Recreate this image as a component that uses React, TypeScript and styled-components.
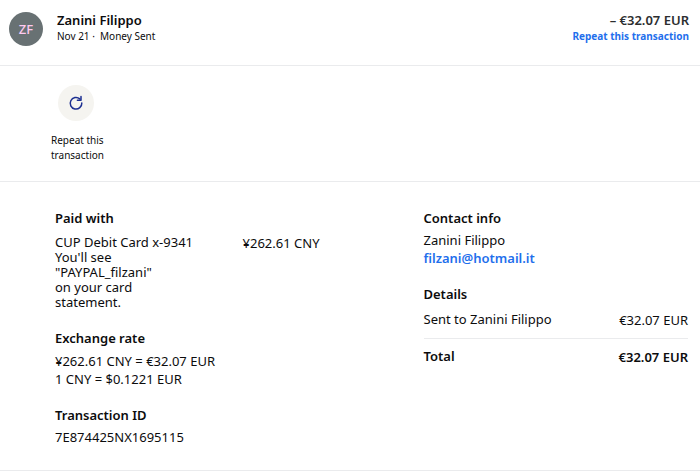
import React from "react";
import styled, { createGlobalStyle } from "styled-components";

const GlobalStyle = createGlobalStyle`
  *, *::before, *::after { box-sizing: border-box; }
  body {
    margin: 0;
    background: #fff;
    color: #0c0c0d;
    font-family: "Noto Sans", "Open Sans", sans-serif;
    font-size: 13px;
    line-height: 18px;
  }
  h1, h2, p, dl, dt, dd { margin: 0; }
`;

const Transaction = styled.article`
  border-bottom: 1px solid #eaebed;
`;

const Header = styled.header`
  display: flex;
  align-items: flex-start;
  gap: 14px;
  padding: 12px 11px 19px 9px;
  border-bottom: 1px solid #eaebed;
`;

const Avatar = styled.div`
  display: flex;
  align-items: center;
  justify-content: center;
  width: 34px;
  height: 34px;
  border-radius: 50%;
  background: #687173;
  color: #ffc9f0;
  font-weight: 500;
`;

const Summary = styled.div<{ $end?: boolean }>`
  display: flex;
  flex-direction: column;
  align-items: ${(p) => (p.$end ? "flex-end" : "flex-start")};
  margin-left: ${(p) => (p.$end ? "auto" : "0")};
`;

const Name = styled.h1`
  font-size: 13px;
  font-weight: 600;
  line-height: 17px;
`;

const Amount = styled.strong`
  color: #2c2e2f;
  font-weight: 600;
  line-height: 17px;
`;

const Meta = styled.p`
  font-size: 10px;
  line-height: 15px;
`;

const Link = styled.a<{ $small?: boolean }>`
  color: #1f6fec;
  font-size: ${(p) => (p.$small ? "10px" : "13px")};
  line-height: ${(p) => (p.$small ? "15px" : "18px")};
  font-weight: ${(p) => (p.$small ? 700 : 600)};
  text-decoration: none;
`;

const Actions = styled.div`
  padding: 19px 36px 18px;
  border-bottom: 1px solid #eaebed;
`;

const ActionButton = styled.button`
  display: flex;
  flex-direction: column;
  align-items: center;
  gap: 12px;
  width: 80px;
  padding: 0;
  border: 0;
  background: none;
  color: inherit;
  font: inherit;
  font-size: 10px;
  line-height: 15px;
  cursor: pointer;
`;

const ActionIcon = styled.span`
  display: flex;
  align-items: center;
  justify-content: center;
  width: 36px;
  height: 36px;
  border-radius: 50%;
  background: #f5f4f0;
`;

const ActionLabel = styled.span`
  width: 64px;
  padding-left: 7px;
  text-align: left;
`;

const Details = styled.div`
  display: grid;
  grid-template-columns: 1fr 1fr;
  gap: 104px;
  padding: 27px 12px 24px 55px;
`;

const Column = styled.div`
  display: flex;
  flex-direction: column;
  gap: 18px;
`;

const Section = styled.section<{ $roomy?: boolean }>`
  display: flex;
  flex-direction: column;
  gap: ${(p) => (p.$roomy ? "5px" : "4px")};
`;

const Heading = styled.h2`
  font-size: 13px;
  font-weight: 600;
  line-height: 18px;
`;

const Source = styled.div`
  display: flex;
  align-items: flex-start;
  justify-content: space-between;
  padding: 4px 0 1px;
  line-height: 16px;
`;

const Card = styled.p`
  line-height: 15px;
`;

const Row = styled.div<{ $total?: boolean }>`
  display: flex;
  align-items: flex-start;
  justify-content: space-between;
  padding: ${(p) => (p.$total ? "8px 0 0" : "3px 0 8px")};
  border-top: ${(p) => (p.$total ? "1px solid #eaebed" : "0")};
  font-weight: ${(p) => (p.$total ? 600 : 400)};
`;

const RowAmount = styled.dd`
  line-height: 20px;
`;

const RepeatIcon = () => (
  <svg width="16" height="16" viewBox="0 0 16 16" fill="none" aria-hidden="true">
    <path
      d="M11.8 3.9A5.8 5.8 0 1 0 13.8 8"
      stroke="#1c2f91"
      strokeWidth="1.5"
      strokeLinecap="round"
    />
    <path
      d="M13 1.6v3.6H9.4"
      stroke="#1c2f91"
      strokeWidth="1.5"
      strokeLinecap="round"
      strokeLinejoin="round"
    />
  </svg>
);

export default function App() {
  return (
    <>
      <GlobalStyle />
      <Transaction>
        <Header>
          <Avatar>ZF</Avatar>
          <Summary>
            <Name>Zanini Filippo</Name>
            <Meta>Nov 21 · &nbsp;Money Sent</Meta>
          </Summary>
          <Summary $end>
            <Amount>– €32.07 EUR</Amount>
            <Link href="#repeat" $small>Repeat this transaction</Link>
          </Summary>
        </Header>
        <Actions>
          <ActionButton type="button">
            <ActionIcon><RepeatIcon /></ActionIcon>
            <ActionLabel>Repeat this transaction</ActionLabel>
          </ActionButton>
        </Actions>
        <Details>
          <Column>
            <Section>
              <Heading>Paid with</Heading>
              <Source>
                <Card>
                  CUP Debit Card x-9341
                  <br />
                  You'll see
                  <br />
                  "PAYPAL_filzani"
                  <br />
                  on your card
                  <br />
                  statement.
                </Card>
                <span>¥262.61 CNY</span>
              </Source>
            </Section>
            <Section $roomy>
              <Heading>Exchange rate</Heading>
              <div>
                <p>¥262.61 CNY = €32.07 EUR</p>
                <p>1 CNY = $0.1221 EUR</p>
              </div>
            </Section>
            <Section>
              <Heading>Transaction ID</Heading>
              <p>7E874425NX1695115</p>
            </Section>
          </Column>
          <Column>
            <Section>
              <Heading>Contact info</Heading>
              <div>
                <p>Zanini Filippo</p>
                <Link href="mailto:filzani@hotmail.it">filzani@hotmail.it</Link>
              </div>
            </Section>
            <Section>
              <Heading>Details</Heading>
              <dl>
                <Row>
                  <dt>Sent to Zanini Filippo</dt>
                  <RowAmount>€32.07 EUR</RowAmount>
                </Row>
                <Row $total>
                  <dt>Total</dt>
                  <RowAmount>€32.07 EUR</RowAmount>
                </Row>
              </dl>
            </Section>
          </Column>
        </Details>
      </Transaction>
    </>
  );
}
